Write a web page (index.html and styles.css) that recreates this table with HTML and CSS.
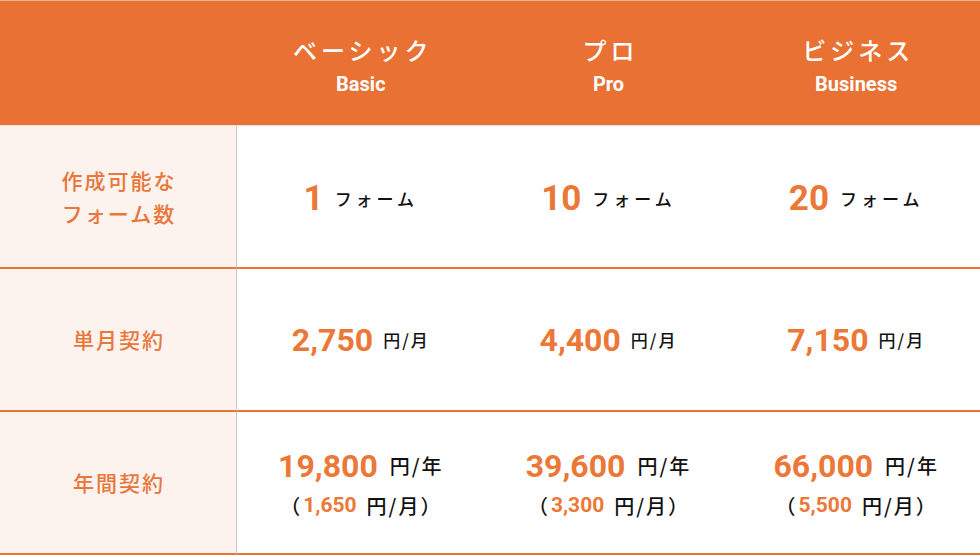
FILE: index.html
```html
<!DOCTYPE html>
<html lang="ja">
<head>
<meta charset="utf-8">
<title>料金プラン</title>
<link rel="stylesheet" href="styles.css">
</head>
<body>
<div class="price-table">
  <div class="head-cell head-blank"></div>
  <div class="head-cell">
    <div class="plan-ja">ベーシック</div>
    <div class="plan-en">Basic</div>
  </div>
  <div class="head-cell">
    <div class="plan-ja">プロ</div>
    <div class="plan-en">Pro</div>
  </div>
  <div class="head-cell">
    <div class="plan-ja">ビジネス</div>
    <div class="plan-en">Business</div>
  </div>

  <div class="label-cell"><span>作成可能な<br>フォーム数</span></div>
  <div class="value-cell form-cell"><span class="num num-lg">1</span><span class="unit unit-form">フォーム</span></div>
  <div class="value-cell form-cell"><span class="num num-lg">10</span><span class="unit unit-form">フォーム</span></div>
  <div class="value-cell form-cell"><span class="num num-lg">20</span><span class="unit unit-form">フォーム</span></div>

  <div class="label-cell"><span>単月契約</span></div>
  <div class="value-cell"><span class="num">2,750</span><span class="unit">円/月</span></div>
  <div class="value-cell"><span class="num">4,400</span><span class="unit">円/月</span></div>
  <div class="value-cell"><span class="num">7,150</span><span class="unit">円/月</span></div>

  <div class="label-cell"><span>年間契約</span></div>
  <div class="value-cell stack">
    <div class="line1"><span class="num num-md">19,800</span><span class="unit unit-md">円/年</span></div>
    <div class="line2"><span class="paren-open">（</span><span class="num num-sm">1,650</span><span class="unit-sm">円/月</span><span class="paren-close">）</span></div>
  </div>
  <div class="value-cell stack">
    <div class="line1"><span class="num num-md">39,600</span><span class="unit unit-md">円/年</span></div>
    <div class="line2"><span class="paren-open">（</span><span class="num num-sm">3,300</span><span class="unit-sm">円/月</span><span class="paren-close">）</span></div>
  </div>
  <div class="value-cell stack">
    <div class="line1"><span class="num num-md">66,000</span><span class="unit unit-md">円/年</span></div>
    <div class="line2"><span class="paren-open">（</span><span class="num num-sm">5,500</span><span class="unit-sm">円/月</span><span class="paren-close">）</span></div>
  </div>
</div>
</body>
</html>
```
FILE: styles.css
```css
html, body {
  margin: 0;
  padding: 0;
  background: #ffffff;
}

body {
  font-family: "Noto Sans CJK JP", "Noto Sans", sans-serif;
  color: #111111;
}

.price-table {
  display: grid;
  grid-template-columns: 237px repeat(3, 1fr);
  grid-template-rows: 125px repeat(3, 143px);
  border-top: 1px solid #efb394;
  width: 980px;
}

.head-cell {
  background: #e87133;
  border-bottom: 1px solid #e6e1de;
  display: flex;
  flex-direction: column;
  align-items: center;
  padding-top: 37px;
  color: #ffffff;
}

.plan-ja {
  font-size: 24px;
  font-weight: 500;
  line-height: 24px;
  letter-spacing: 4px;
  margin-right: -4px;
}

.plan-en {
  font-family: Roboto, "Liberation Sans", sans-serif;
  font-weight: 700;
  font-size: 20px;
  line-height: 20px;
  margin-top: 12px;
}

.label-cell {
  background: #fcf2ee;
  border-right: 1px solid #c9c6c4;
  border-bottom: 2px solid #ea7438;
  display: flex;
  align-items: center;
  justify-content: center;
  text-align: center;
  color: #e9763a;
  font-size: 21px;
  font-weight: 500;
  line-height: 33px;
  letter-spacing: 2px;
}

.label-cell span {
  margin-right: -2px;
}

.value-cell {
  border-bottom: 2px solid #ea7438;
  display: flex;
  align-items: center;
  justify-content: center;
}

.form-cell {
  padding-top: 4px;
}

.num {
  font-family: Roboto, "Liberation Sans", sans-serif;
  font-weight: 700;
  color: #ec7838;
  font-size: 32px;
  line-height: 1;
}

.num-lg {
  font-size: 35px;
}

.unit {
  font-size: 17px;
  font-weight: 500;
  letter-spacing: 2px;
  margin-left: 10px;
  line-height: 1;
}

.unit-form {
  letter-spacing: 4px;
  margin-left: 11px;
}

.stack {
  flex-direction: column;
  padding-top: 6px;
}

.line1 {
  display: flex;
  align-items: center;
  height: 30px;
}

.num-md {
  font-size: 32px;
}

.unit-md {
  font-size: 20px;
  margin-left: 12px;
}

.line2 {
  display: flex;
  align-items: center;
  margin-top: 10px;
  font-size: 20px;
  font-weight: 500;
  line-height: 30px;
}

.paren-open {
  margin-left: -5px;
  margin-right: 3px;
}

.paren-close {
  margin-right: -4px;
}

.num-sm {
  font-size: 21px;
}

.unit-sm {
  font-size: 20px;
  letter-spacing: 2px;
  margin-left: 10px;
}
```
